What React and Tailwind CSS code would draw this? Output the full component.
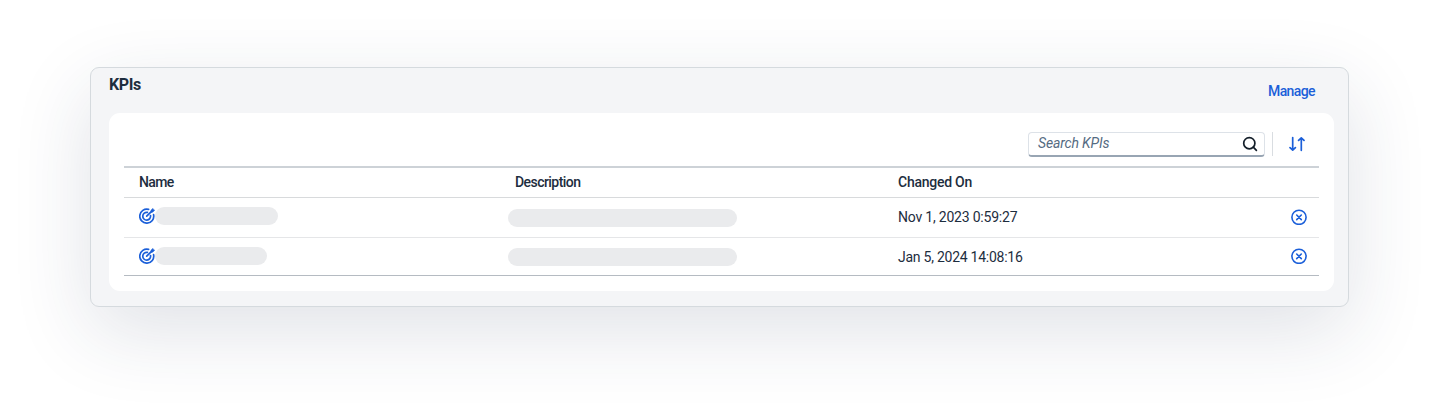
const TargetIcon = () => (
  <svg className="block h-4 w-4 shrink-0" viewBox="0 0 16 16" fill="none" stroke="#1b5fd9" strokeWidth="1.7" strokeLinecap="round">
    <path d="M9.6 1.4A7 7 0 1 0 14.6 6.7" />
    <path d="M8.4 4.4A3.9 3.9 0 1 0 11.5 7.5" />
    <path d="M7.7 8.2L12.8 3.1" />
    <path d="M12 4V2.2L14 .5L14.3 1.7L15.6 2.1L13.9 4Z" fill="#1b5fd9" strokeWidth=".7" strokeLinejoin="round" />
  </svg>
);

const RemoveIcon = () => (
  <svg className="mb-px ml-[0.5px] block h-4 w-4" viewBox="0 0 16 16" fill="none" stroke="#1b5fd9" strokeWidth="1.6" strokeLinecap="round">
    <circle cx="8" cy="8.3" r="7.1" />
    <path d="M5.7 6L10.3 10.6M10.3 6L5.7 10.6" />
  </svg>
);

const SearchIcon = () => (
  <svg className="block h-4 w-4" viewBox="0 0 16 16" fill="none" stroke="#131e29" strokeWidth="1.7" strokeLinecap="round">
    <circle cx="7.3" cy="7.2" r="5.6" />
    <path d="M11.3 11.2L14.4 14.3" />
  </svg>
);

const SortIcon = () => (
  <svg className="block h-4 w-4" viewBox="0 0 16 16" fill="none" stroke="#1b5fd9" strokeWidth="1.7" strokeLinecap="round" strokeLinejoin="round">
    <path d="M3.7 1.6V14M1 11.6L3.7 14.2L6.4 11.6" />
    <path d="M12.3 14.3V2M9.6 4.4L12.3 1.8L15 4.4" />
  </svg>
);

export default function App() {
  return (
    <div className="h-[419px] w-[1439px] overflow-hidden bg-white pt-[67px] pl-[90px] font-['Roboto','Liberation_Sans',sans-serif] text-sm text-[#1d2d3e]">
      <section className="h-[240px] w-[1259px] rounded-[9px] border border-[#d5dade] bg-[#f4f5f7] pr-[14px] pl-[18px] shadow-[0_24px_80px_rgba(34,53,88,0.14)]">
        <header className="flex h-[45px] justify-between pr-[19px]">
          <h2 className="pt-[5px] text-[16px] leading-6 font-bold tracking-[-0.35px]">KPIs</h2>
          <button className="mt-[11px] h-6 text-[14px] leading-6 font-medium tracking-[-0.6px] text-[#1b5fd9]">Manage</button>
        </header>
        <div className="h-[178px] rounded-[11px] bg-white px-[15px]">
          <div className="flex h-[53px] items-start justify-end pt-[19px] pr-[14px]">
            <div className="flex h-[25px] w-[237px] items-center justify-between rounded-[4px] border border-b-2 border-[#dde2e8] border-b-[#98a5b3] pr-[6px] pl-[9px]">
              <span className="pb-[2px] text-[14px] tracking-[-0.15px] text-[#556b82] italic">Search KPIs</span>
              <SearchIcon />
            </div>
            <div className="ml-[7px] h-6 w-px bg-[#d9dde1]" />
            <div className="mt-[4px] ml-[16px]"><SortIcon /></div>
          </div>
          <div className="grid h-[32px] grid-cols-[376px_383px_1fr] items-center border-t-2 border-b border-t-[#cdd2d7] border-b-[#d8dadc] pb-[2px] pl-[15px] text-[14px] font-medium">
            <span className="tracking-[-0.6px]">Name</span>
            <span className="tracking-[-0.55px]">Description</span>
            <span className="tracking-[-0.25px]">Changed On</span>
          </div>
          <div className="grid h-[40px] grid-cols-[369px_390px_1fr_29px] items-center border-b border-[#e5e6e8] pl-[15px]">
            <div className="mb-[4px] flex items-center">
              <TargetIcon />
              <div className="h-[18px] w-[123px] rounded-full bg-[#eaebed]" />
            </div>
            <div className="h-[18px] w-[229px] rounded-full bg-[#eaebed]" />
            <span className="pb-[2px] tracking-[-0.21px]">Nov 1, 2023 0:59:27</span>
            <RemoveIcon />
          </div>
          <div className="grid h-[38px] grid-cols-[369px_390px_1fr_29px] items-center border-b border-[#b5bbc2] pl-[15px]">
            <div className="mb-px flex items-center">
              <TargetIcon />
              <div className="h-[18px] w-[112px] rounded-full bg-[#eaebed]" />
            </div>
            <div className="h-[18px] w-[229px] rounded-full bg-[#eaebed]" />
            <span className="tracking-[-0.25px]">Jan 5, 2024 14:08:16</span>
            <RemoveIcon />
          </div>
        </div>
      </section>
    </div>
  );
}
